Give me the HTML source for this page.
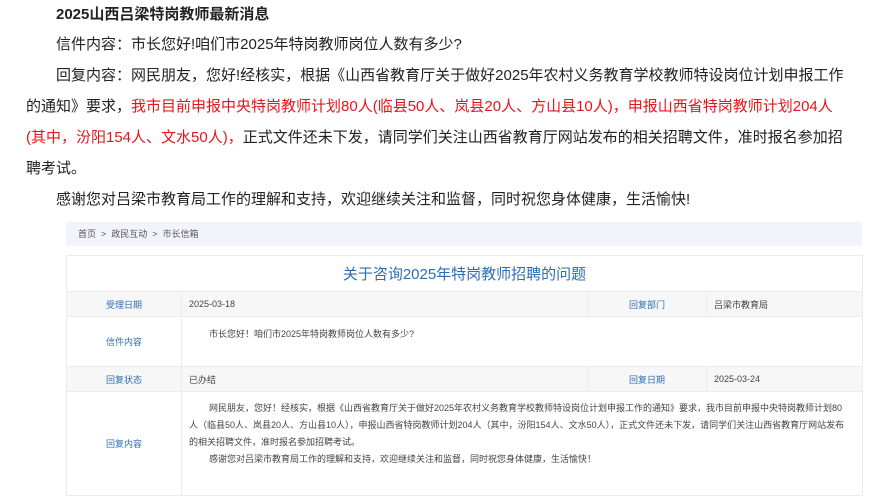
<!DOCTYPE html>
<html><head><meta charset="utf-8"><style>
body{margin:0;width:888px;height:500px;background:#fff;font-family:"Liberation Sans","Noto Sans CJK SC",sans-serif;color:#222;position:relative;overflow:hidden}
.p{position:absolute;left:26px;width:818px;font-size:15px;line-height:31px;}
.r{color:#e8141a}
.bc{position:absolute;left:66px;top:222px;width:796px;height:24px;background:#f1f5fb;font-size:9px;color:#555;line-height:24px;padding-left:12px;box-sizing:border-box}
table{position:absolute;left:66px;top:255px;width:797px;border-collapse:collapse;font-size:9px;color:#444}
td{border:1px solid #ececec;padding:0}
.l{color:#2d6db4;text-align:center}
.g td{background:#f7f7f7}
.v{padding-left:7px}
</style></head><body>
<div class="p" style="top:-1px;left:56px;font-weight:bold">2025山西吕梁特岗教师最新消息</div>
<div class="p" style="top:29px;left:56px">信件内容：市长您好!咱们市2025年特岗教师岗位人数有多少?</div>
<div class="p" style="top:60px;text-indent:30px">回复内容：网民朋友，您好!经核实，根据《山西省教育厅关于做好2025年农村义务教育学校教师特设岗位计划申报工作的通知》要求，<span class="r">我市目前申报中央特岗教师计划80人(临县50人、岚县20人、方山县10人)，申报山西省特岗教师计划204人(其中，汾阳154人、文水50人)，</span>正式文件还未下发，请同学们关注山西省教育厅网站发布的相关招聘文件，准时报名参加招聘考试。</div>
<div class="p" style="top:184px;left:56px">感谢您对吕梁市教育局工作的理解和支持，欢迎继续关注和监督，同时祝您身体健康，生活愉快!</div>
<div class="bc">首页 &nbsp;&gt;&nbsp; 政民互动 &nbsp;&gt;&nbsp; 市长信箱</div>
<table>
<tr style="height:36px"><td colspan="4" style="text-align:center;font-size:15px;color:#2d6db4">关于咨询2025年特岗教师招聘的问题</td></tr>
<tr class="g" style="height:25px"><td class="l" style="width:114px">受理日期</td><td class="v" style="width:398px">2025-03-18</td><td class="l" style="width:118px">回复部门</td><td class="v">吕梁市教育局</td></tr>
<tr style="height:50px"><td class="l">信件内容</td><td colspan="3" class="v" style="vertical-align:top;padding-top:10px;text-indent:20px">市长您好！咱们市2025年特岗教师岗位人数有多少?</td></tr>
<tr class="g" style="height:25px"><td class="l">回复状态</td><td class="v">已办结</td><td class="l">回复日期</td><td class="v">2025-03-24</td></tr>
<tr style="height:104px"><td class="l">回复内容</td><td colspan="3" class="v" style="vertical-align:top;padding-top:8px;line-height:17px;padding-right:12px"><div style="text-indent:20px">网民朋友，您好！经核实，根据《山西省教育厅关于做好2025年农村义务教育学校教师特设岗位计划申报工作的通知》要求，我市目前申报中央特岗教师计划80人（临县50人、岚县20人、方山县10人），申报山西省特岗教师计划204人（其中，汾阳154人、文水50人），正式文件还未下发，请同学们关注山西省教育厅网站发布的相关招聘文件，准时报名参加招聘考试。</div><div style="text-indent:20px">感谢您对吕梁市教育局工作的理解和支持，欢迎继续关注和监督，同时祝您身体健康，生活愉快！</div></td></tr>
</table>
</body></html>
